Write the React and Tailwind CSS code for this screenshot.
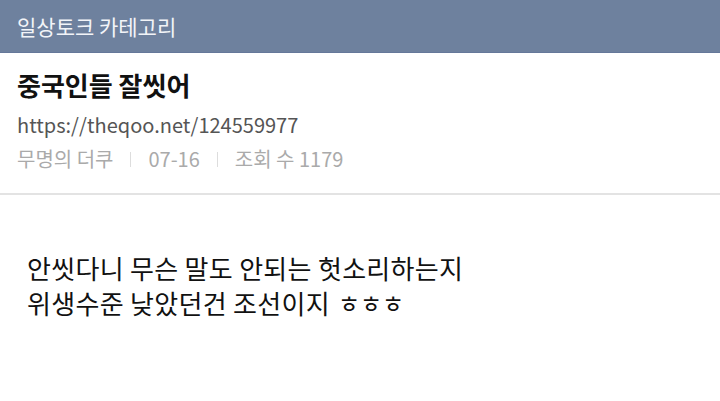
export default function App() {
  const font = { fontFamily: '"Noto Sans CJK KR", "Noto Sans", sans-serif' };
  return (
    <div className="w-[720px] h-[401px] bg-white overflow-hidden" style={font}>
      <div className="h-[53px] bg-[#6e819e] border-b border-[#65789a] flex items-center px-[17px]">
        <span className="text-[21px] text-[#f2f4f8] leading-none">일상토크 카테고리</span>
      </div>
      <div className="px-[17px] pt-[15px] h-[142px] border-b-2 border-[#e3e3e3]">
        <div className="text-[26px] font-bold text-[#111] leading-[34px]">중국인들 잘씻어</div>
        <div className="text-[20px] text-[#555] leading-[28px] mt-[9px]">https://theqoo.net/124559977</div>
        <div className="text-[20px] text-[#aaa] leading-[28px] mt-[6px] flex items-center">
          <span>무명의 더쿠</span>
          <span className="mx-[17px] w-px h-[15px] bg-[#ddd]"></span>
          <span>07-16</span>
          <span className="mx-[17px] w-px h-[15px] bg-[#ddd]"></span>
          <span>조회 수 1179</span>
        </div>
      </div>
      <div className="px-[27px] pt-[55px] text-[26px] text-[#111] leading-[35px] tracking-[0.3px]">
        <div>안씻다니 무슨 말도 안되는 헛소리하는지</div>
        <div className="flex items-center">
          <span>위생수준 낮았던건 조선이지</span>
          <span className="ml-[8px] text-[24px] tracking-normal">ㅎㅎㅎ</span>
        </div>
      </div>
    </div>
  );
}
